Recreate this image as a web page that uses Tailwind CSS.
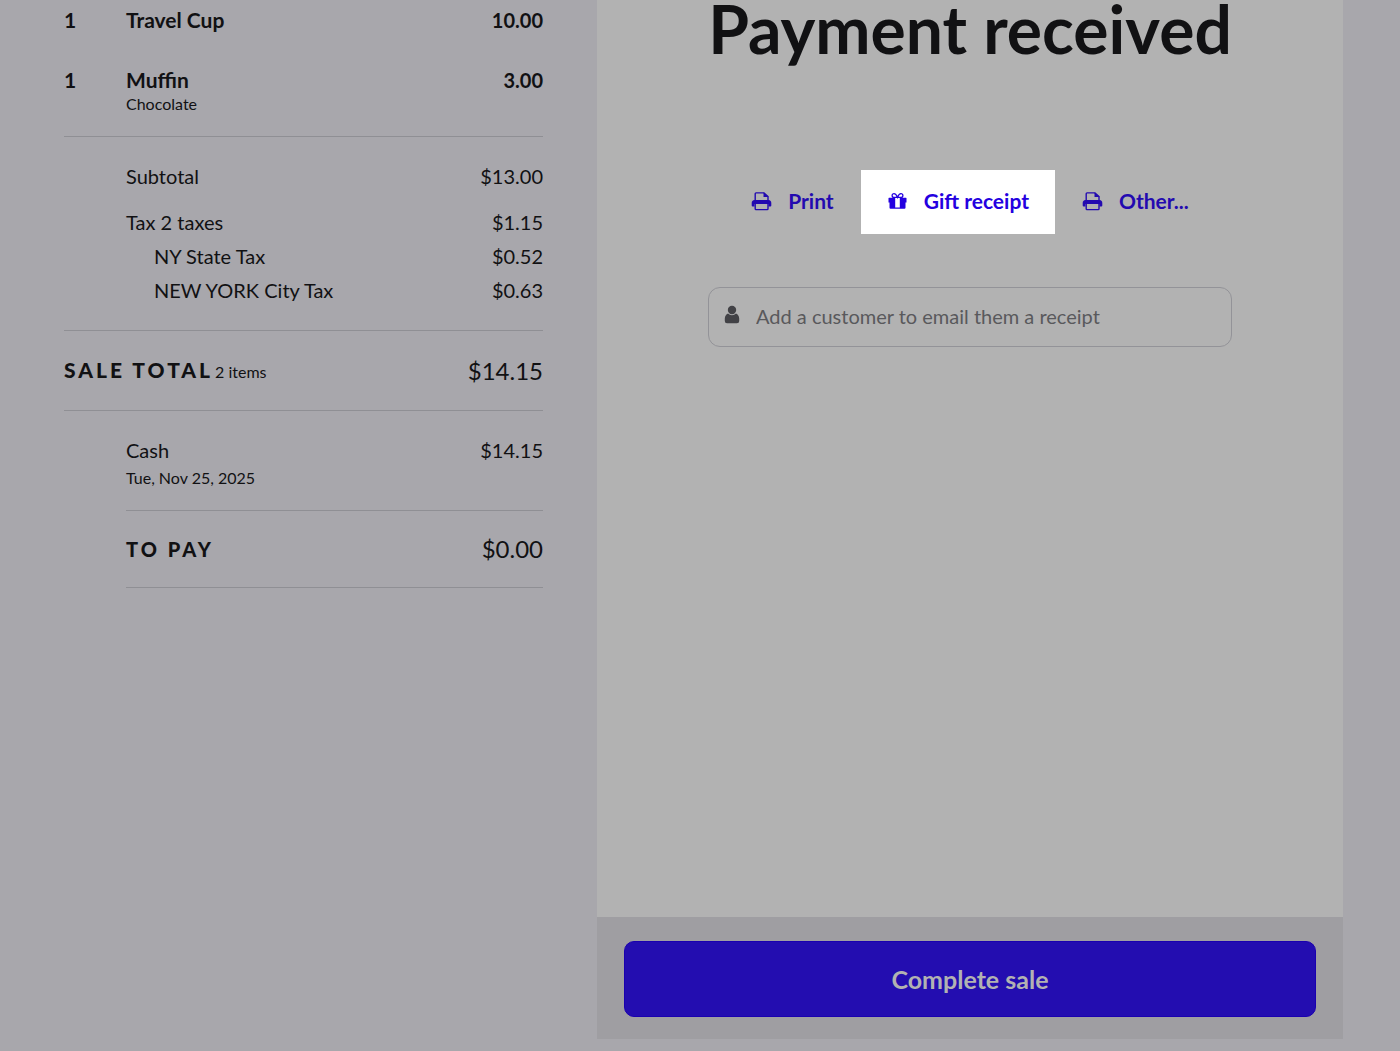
<!DOCTYPE html>
<html lang="en">
<head>
    <meta charset="UTF-8">
    <meta name="viewport" content="width=device-width, initial-scale=1.0">
    <title>Payment received</title>
    <script src="https://cdn.jsdelivr.net/npm/@tailwindcss/browser@4"></script>
</head>
<body class="bg-[#a8a7ac] text-[#111113] font-['Lato',sans-serif] text-[20px] leading-6">
    <div class="grid grid-cols-[597fr_746fr] min-h-screen pr-[57px] pb-3">

        <!-- Sale summary -->
        <section class="pl-16 pr-[54px] pt-2">
            <table class="w-full text-left">
                <tbody>
                    <tr class="align-top font-bold">
                        <td class="w-[62px] text-[21px]">1</td>
                        <td class="pb-9 text-[21px]">Travel Cup</td>
                        <td class="text-right">10.00</td>
                    </tr>
                    <tr class="align-top font-bold">
                        <td class="text-[21px]">1</td>
                        <td class="pb-5 text-[21px]">Muffin<div class="text-[16px] font-normal">Chocolate</div></td>
                        <td class="text-right">3.00</td>
                    </tr>
                </tbody>
            </table>

            <dl class="border-t border-[#8f8f94] pt-[27px] pb-7 pl-[62px]">
                <div class="flex justify-between"><dt>Subtotal</dt><dd>$13.00</dd></div>
                <div class="flex justify-between mt-[22px]"><dt>Tax 2 taxes</dt><dd>$1.15</dd></div>
                <div class="flex justify-between mt-[10px] pl-7"><dt>NY State Tax</dt><dd>$0.52</dd></div>
                <div class="flex justify-between mt-[10px] pl-7"><dt>NEW YORK City Tax</dt><dd>$0.63</dd></div>
            </dl>

            <dl class="flex items-center justify-between border-y border-[#8f8f94] pt-[27px] pb-[26px]">
                <dt class="flex items-baseline gap-[2px]"><span class="text-[21px] font-black tracking-[3px]">SALE TOTAL</span><span class="text-[16px]">2 items</span></dt>
                <dd class="text-[24px]">$14.15</dd>
            </dl>

            <dl class="ml-[62px] pt-[27px] pb-5">
                <div class="flex justify-between">
                    <dt>Cash<div class="mt-1 text-[16px]">Tue, Nov 25, 2025</div></dt>
                    <dd>$14.15</dd>
                </div>
            </dl>

            <dl class="ml-[62px] flex items-center justify-between border-y border-[#8f8f94] py-[26px]">
                <dt class="font-black tracking-[3px]">TO PAY</dt>
                <dd class="text-[24px]">$0.00</dd>
            </dl>
        </section>

        <!-- Payment panel -->
        <main class="flex flex-col bg-[#b2b2b2]">
            <div class="grow px-[111px]">
                <h1 class="text-center text-[66px] leading-[58px] font-bold whitespace-nowrap">Payment received</h1>

                <div class="mt-28 flex justify-center text-[21px] font-bold text-[#230ab0]">
                    <button type="button" class="flex h-16 items-center gap-4 px-[27px] pb-[2px]">
                        <svg class="size-[21px]" viewBox="0 0 21 21" fill="none" stroke="currentColor" stroke-width="1.4" aria-hidden="true">
                            <path d="M4.200 9V2.800Q4.200 1.900 5.100 1.900H13L17 5.600V9" />
                            <path d="M12.500 1.500V5.900H17.500Z" fill="currentColor" stroke="none" />
                            <path d="M3.500 9H17.500Q20.300 9.300 20.300 12V14.500Q20.300 15.500 19.300 15.500H17.500V13H3.500V15.500H1.700Q.7 15.500 .7 14.500V12Q.7 9.300 3.500 9Z" fill="currentColor" stroke="none" />
                            <path d="M4.200 12V17.800Q4.200 18.600 5 18.600H16.200Q17 18.600 17 17.800V12" />
                        </svg>
                        Print
                    </button>
                    <button type="button" class="flex h-16 items-center gap-4 bg-white px-[26px] pb-[2px] text-[#2400e0]">
                        <svg class="size-[21px]" viewBox="0 0 21 21" aria-hidden="true">
                            <path d="M2 6.700H19Q19.500 6.700 19.500 7.200V11.500H18.500V16.800Q18.500 17.800 17.500 17.800H3.500Q2.500 17.800 2.500 16.800V11.500H1.500V7.200Q1.500 6.700 2 6.700Z" fill="currentColor" />
                            <path d="M8.200 5.500H12.800V16.500H8.200Z" fill="#ffffff" />
                            <path d="M10.500 6.400C9.600 4.200 8.500 2.600 7 2.600A1.900 1.900 0 0 0 7 6.400H14A1.900 1.900 0 0 0 14 2.600C12.500 2.600 11.400 4.200 10.500 6.400Z" fill="#ffffff" stroke="currentColor" stroke-width="1.300" />
                        </svg>
                        Gift receipt
                    </button>
                    <button type="button" class="flex h-16 items-center gap-4 px-[27px] pb-[2px]">
                        <svg class="size-[21px]" viewBox="0 0 21 21" fill="none" stroke="currentColor" stroke-width="1.4" aria-hidden="true">
                            <path d="M4.200 9V2.800Q4.200 1.900 5.100 1.900H13L17 5.600V9" />
                            <path d="M12.500 1.500V5.900H17.500Z" fill="currentColor" stroke="none" />
                            <path d="M3.500 9H17.500Q20.300 9.300 20.300 12V14.500Q20.300 15.500 19.300 15.500H17.500V13H3.500V15.500H1.700Q.7 15.500 .7 14.500V12Q.7 9.300 3.500 9Z" fill="currentColor" stroke="none" />
                            <path d="M4.200 12V17.800Q4.200 18.600 5 18.600H16.200Q17 18.600 17 17.800V12" />
                        </svg>
                        Other...
                    </button>
                </div>

                <div class="mt-[53px] flex h-[60px] items-center gap-4 rounded-xl border border-[#939398] px-[15px] pb-[2px]">
                    <label for="customer" aria-label="Customer">
                        <svg class="mb-[2px] h-5 w-4" viewBox="0 0 16 20" fill="#424246" aria-hidden="true">
                            <circle cx="8" cy="5" r="4.200" />
                            <path d="M4 8.500Q1 9.800 .8 13.500V16Q.8 18.200 3 18.200H13Q15.200 18.200 15.200 16V13.500Q15 9.800 12 8.500Q10.300 10.300 8 10.300Q5.700 10.300 4 8.500Z" />
                        </svg>
                    </label>
                    <input id="customer" type="text" placeholder="Add a customer to email them a receipt" class="min-w-0 grow bg-transparent text-[20px] outline-none placeholder:text-[#59595c]">
                </div>
            </div>

            <footer class="bg-[#9f9ea2] px-[27px] pt-6 pb-[22px]">
                <button type="button" class="h-[76px] w-full rounded-[10px] border border-[#1a00b0] bg-[#230db0] text-[25px] font-bold text-[#b2b2b2]">Complete sale</button>
            </footer>
        </main>
    </div>
</body>
</html>
